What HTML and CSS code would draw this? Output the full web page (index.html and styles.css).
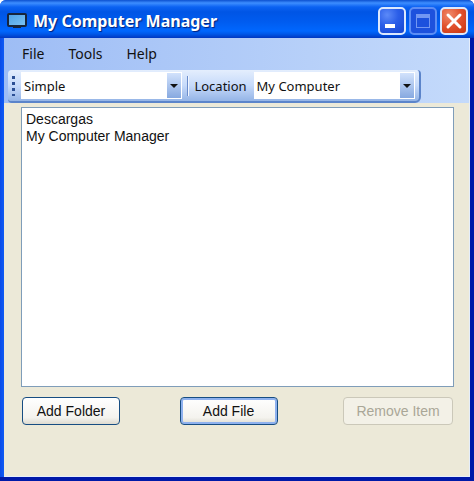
FILE: index.html
```html
<!DOCTYPE html>
<html lang="en">
<head>
<meta charset="utf-8">
<title>My Computer Manager</title>
<link rel="stylesheet" href="styles.css">
</head>
<body>
<main class="window">
  <header class="titlebar">
    <svg class="app-icon" width="20" height="16" viewBox="0 0 20 16" aria-hidden="true">
      <defs><linearGradient id="screen" x1="0" y1="0" x2="1" y2="1"><stop offset="0" stop-color="#4b9fe6"/><stop offset="1" stop-color="#7cc4f4"/></linearGradient></defs>
      <rect x="1" y="1" width="18" height="12" rx="1" fill="url(#screen)" stroke="#17253d" stroke-width="2"/>
      <path d="M8 13h4v1h2v1H6v-1h2z" fill="#17253d"/>
    </svg>
    <h1 class="title">My Computer Manager</h1>
    <div class="controls">
      <button class="control" type="button" aria-label="Minimize">
        <svg width="24" height="24" viewBox="0 0 24 24"><rect x="5" y="15" width="10" height="4" fill="#fff"/></svg>
      </button>
      <button class="control control-disabled" type="button" aria-label="Maximize" disabled>
        <svg width="24" height="24" viewBox="0 0 24 24"><path d="M5 5h14v14H5zM6 9v9h12V9z" fill="#7397f2" fill-rule="evenodd"/></svg>
      </button>
      <button class="control control-close" type="button" aria-label="Close">
        <svg width="24" height="24" viewBox="0 0 24 24"><path d="M6 6l12 12M18 6L6 18" stroke="#fff" stroke-width="3" stroke-linecap="round"/></svg>
      </button>
    </div>
  </header>
  <div class="client">
    <div class="bars">
      <nav class="menu">
        <button class="menu-item" type="button">File</button>
        <button class="menu-item" type="button">Tools</button>
        <button class="menu-item" type="button">Help</button>
      </nav>
      <div class="toolbar">
        <span class="grip"></span>
        <div class="combo">
          <select class="combo-select" aria-label="View"><option>Simple</option></select>
          <span class="combo-arrow"></span>
        </div>
        <span class="separator"></span>
        <label class="combo-label" for="location">Location</label>
        <div class="combo">
          <select class="combo-select" id="location"><option>My Computer</option></select>
          <span class="combo-arrow"></span>
        </div>
      </div>
    </div>
    <div class="content">
      <select class="list" aria-label="Items" multiple>
        <option>Descargas</option>
        <option>My Computer Manager</option>
      </select>
      <div class="actions">
        <button class="button" type="button">Add Folder</button>
        <button class="button button-default" type="button">Add File</button>
        <button class="button button-wide" type="button" disabled>Remove Item</button>
      </div>
    </div>
  </div>
</main>
</body>
</html>
```
FILE: styles.css
```css
* { box-sizing: border-box; }

body {
  margin: 0;
  background: #fff;
  color: #111;
  font: 14px/18px "Liberation Sans", sans-serif;
}

button, select { font: inherit; color: inherit; }

.window {
  display: flex;
  flex-direction: column;
  min-height: 100vh;
  padding: 0 4px 4px 4px;
  background: linear-gradient(90deg, #0a4be8 0, #0f5bf5 4px, #0019a8 calc(100% - 4px), #0019a8 100%);
  border-radius: 6px 6px 0 0;
  overflow: hidden;
  box-shadow: inset 0 -4px #0019a8;
}

.titlebar {
  display: flex;
  align-items: center;
  height: 38px;
  margin: 0 -4px;
  padding: 3px 6px 0 7px;
  background: linear-gradient(#0c50d0 0, #3d8eff 3px, #0b62f2 7px, #0055e5 12px, #005cf0 22px, #0067fe 31px, #0058e8 34px, #0037c0 38px);
}

.app-icon { flex: none; }

.title {
  flex: 1;
  margin: 0;
  padding-left: 6px;
  color: #fff;
  font: bold 16px/24px "Noto Sans", sans-serif;
  text-shadow: 1px 1px 1px #00217c;
  white-space: nowrap;
}

.controls { display: flex; gap: 3px; }

.control {
  width: 28px;
  height: 28px;
  padding: 0;
  border: 2px solid #dce8fd;
  border-radius: 5px;
  background: radial-gradient(circle at 30% 25%, #5c8af8 0, #2b5ee8 45%, #1545d0 100%);
}

.control svg { display: block; }

.control-disabled {
  border-color: #5c8df5;
  background: #1d51dd;
}

.control-close { background: radial-gradient(circle at 30% 25%, #f08a6c 0, #e0502c 50%, #c83410 100%); }

.client {
  flex: 1;
  display: flex;
  flex-direction: column;
  background: #ece9d8;
  border-right: 1px solid #e5eefb;
  border-bottom: 1px solid #e5eefb;
}

.bars { background: linear-gradient(90deg, #9ebdf5, #c4dafb); }

.menu {
  display: flex;
  gap: 8px;
  height: 32px;
  padding: 0 10px;
}

.menu-item {
  padding: 0 8px;
  border: 0;
  background: none;
  font: 14px/32px "Noto Sans", sans-serif;
}

.toolbar {
  display: flex;
  align-items: center;
  width: 413px;
  max-width: 100%;
  height: 33px;
  margin-left: 4px;
  padding: 0 4px;
  border-right: 2px solid #5b84ca;
  border-bottom: 2px solid #5b84ca;
  border-radius: 4px 4px 6px 4px;
  background: linear-gradient(#e4eefd, #c6dafa 50%, #94b4e6);
  font: 13px/18px "Noto Sans", sans-serif;
}

.grip {
  width: 3px;
  height: 20px;
  margin-right: 6px;
  background: repeating-linear-gradient(#2b4f94 0 3px, transparent 3px 6px);
}

.combo {
  display: flex;
  flex: 1;
  height: 27px;
  padding: 1px;
  background: #fff;
}

.combo-select {
  flex: 1;
  min-width: 0;
  padding: 0 2px;
  border: 0;
  appearance: none;
  background: #fff;
}

.combo-arrow {
  display: flex;
  align-items: center;
  justify-content: center;
  width: 14px;
  background: linear-gradient(#d2e2fc, #87a9e0);
}

.combo-arrow::after {
  content: "";
  border: 4px solid transparent;
  border-top-color: #111;
  border-bottom: 0;
}

.separator {
  width: 2px;
  height: 20px;
  margin: 0 5px;
  border-left: 1px solid #6a8ccb;
  border-right: 1px solid #f1f6ff;
}

.combo-label { padding-right: 7px; }

.content {
  flex: 1;
  display: flex;
  flex-direction: column;
  gap: 10px;
  padding: 4px 15px 51px 17px;
}

.list {
  flex: 1;
  min-height: 80px;
  width: 100%;
  padding: 3px 4px;
  border: 1px solid #7f9db9;
  border-radius: 0;
  background: #fff;
  overflow: hidden;
}

.list option { min-height: 17px; padding: 0; }

.actions {
  display: grid;
  grid-template-columns: 1fr auto 1fr;
  padding: 0 1px;
}

.button {
  width: 98px;
  height: 28px;
  padding: 0;
  border: 1px solid #174d82;
  border-radius: 4px;
  background: linear-gradient(#fff, #f4f3ee 75%, #dedbd0);
}

.button-default {
  margin-right: 18px;
  box-shadow: inset 0 0 0 2px #8eb1ee;
}

.button-wide {
  width: 110px;
  justify-self: end;
}

.button:disabled {
  border-color: #cbc8b9;
  background: #f3f1e7;
  color: #aaa797;
}
```
